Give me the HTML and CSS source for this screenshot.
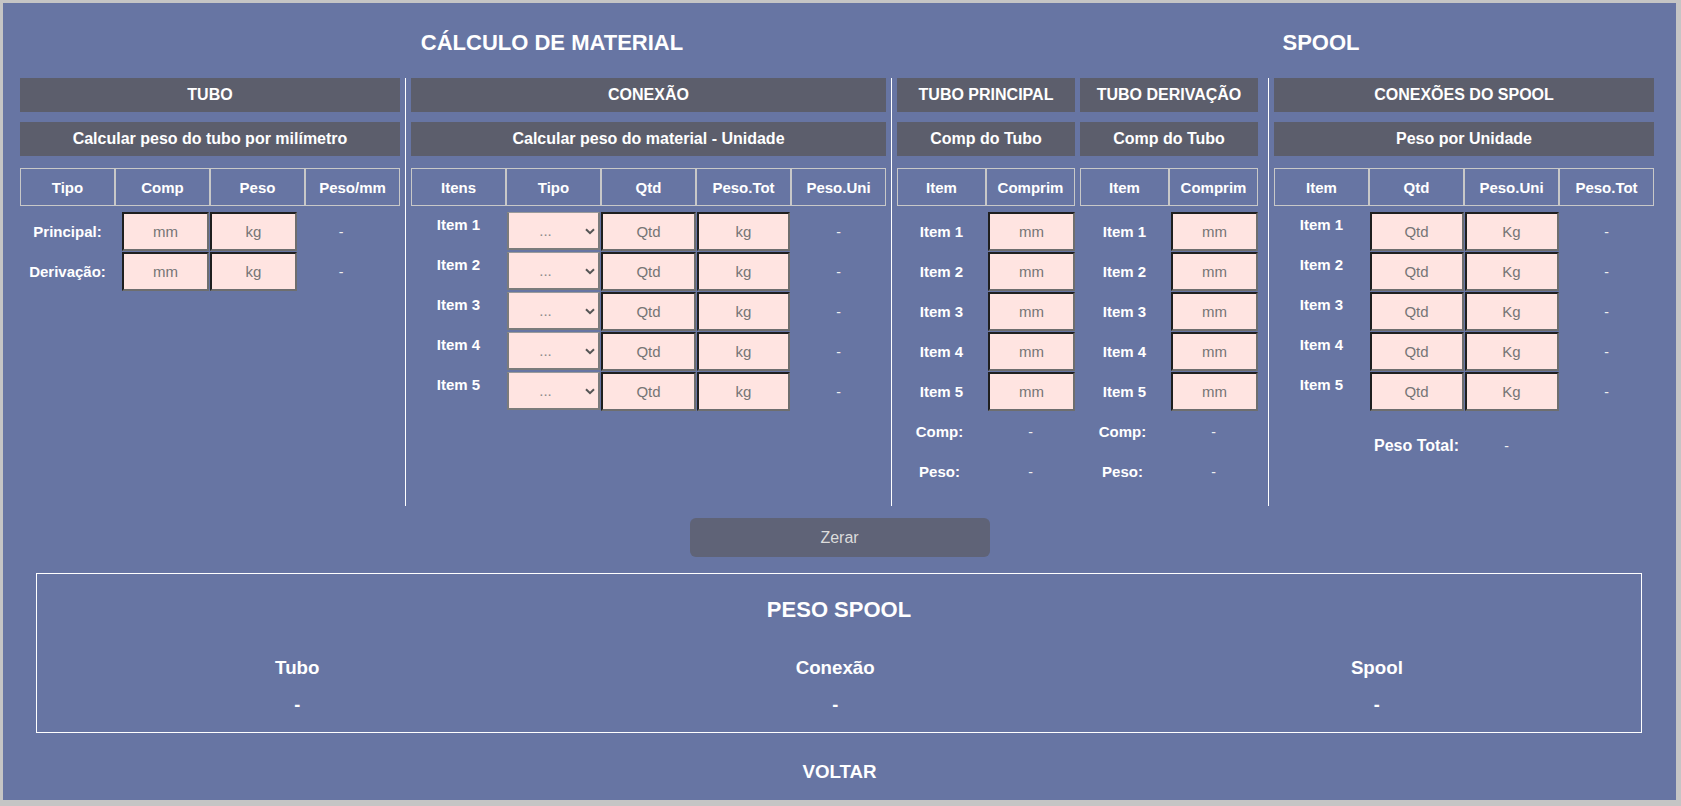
FILE: index.html
```
<!DOCTYPE html>
<html lang="pt-BR">
<head>
<meta charset="utf-8">
<title>Cálculo de Material - Spool</title>
<link rel="stylesheet" href="styles.css">
</head>
<body>
<div class="page">
  <div class="titles">
    <h1 class="t-left">CÁLCULO DE MATERIAL</h1>
    <h1 class="t-right">SPOOL</h1>
  </div>

  <div class="cols">
    <section class="col c-tubo">
      <div class="bar">TUBO</div>
      <div class="bar sub">Calcular peso do tubo por milímetro</div>
      <div class="thead g4"><div>Tipo</div><div>Comp</div><div>Peso</div><div>Peso/mm</div></div>
      <div class="trow">
        <span class="tlbl">Principal:</span>
        <input class="inp w87" placeholder="mm">
        <input class="inp w87 ml1" placeholder="kg">
        <span class="val tval">-</span>
      </div>
      <div class="trow">
        <span class="tlbl">Derivação:</span>
        <input class="inp w87" placeholder="mm">
        <input class="inp w87 ml1" placeholder="kg">
        <span class="val tval">-</span>
      </div>
    </section>

    <div class="divider"></div>

    <section class="col c-con">
      <div class="bar">CONEXÃO</div>
      <div class="bar sub">Calcular peso do material - Unidade</div>
      <div class="thead g5"><div>Itens</div><div>Tipo</div><div>Qtd</div><div>Peso.Tot</div><div>Peso.Uni</div></div>
      <div class="row g5">
        <span class="lbl top">Item 1</span>
        <div class="sel"><select><option>...</option></select><svg class="chev" width="10" height="7" viewBox="0 0 10 7"><path d="M1 1.2 L5 5.2 L9 1.2" fill="none" stroke="#555" stroke-width="2"/></svg></div>
        <input class="inp w95" placeholder="Qtd">
        <input class="inp w93" placeholder="kg">
        <span class="val">-</span>
      </div>
      <div class="row g5">
        <span class="lbl top">Item 2</span>
        <div class="sel"><select><option>...</option></select><svg class="chev" width="10" height="7" viewBox="0 0 10 7"><path d="M1 1.2 L5 5.2 L9 1.2" fill="none" stroke="#555" stroke-width="2"/></svg></div>
        <input class="inp w95" placeholder="Qtd">
        <input class="inp w93" placeholder="kg">
        <span class="val">-</span>
      </div>
      <div class="row g5">
        <span class="lbl top">Item 3</span>
        <div class="sel"><select><option>...</option></select><svg class="chev" width="10" height="7" viewBox="0 0 10 7"><path d="M1 1.2 L5 5.2 L9 1.2" fill="none" stroke="#555" stroke-width="2"/></svg></div>
        <input class="inp w95" placeholder="Qtd">
        <input class="inp w93" placeholder="kg">
        <span class="val">-</span>
      </div>
      <div class="row g5">
        <span class="lbl top">Item 4</span>
        <div class="sel"><select><option>...</option></select><svg class="chev" width="10" height="7" viewBox="0 0 10 7"><path d="M1 1.2 L5 5.2 L9 1.2" fill="none" stroke="#555" stroke-width="2"/></svg></div>
        <input class="inp w95" placeholder="Qtd">
        <input class="inp w93" placeholder="kg">
        <span class="val">-</span>
      </div>
      <div class="row g5">
        <span class="lbl top">Item 5</span>
        <div class="sel"><select><option>...</option></select><svg class="chev" width="10" height="7" viewBox="0 0 10 7"><path d="M1 1.2 L5 5.2 L9 1.2" fill="none" stroke="#555" stroke-width="2"/></svg></div>
        <input class="inp w95" placeholder="Qtd">
        <input class="inp w93" placeholder="kg">
        <span class="val">-</span>
      </div>
    </section>

    <div class="divider"></div>

    <section class="col c-tp">
      <div class="bar">TUBO PRINCIPAL</div>
      <div class="bar sub">Comp do Tubo</div>
      <div class="thead g2"><div>Item</div><div>Comprim</div></div>
      <div class="row g2"><span class="lbl mid">Item 1</span><input class="inp w87 end" placeholder="mm"></div>
      <div class="row g2"><span class="lbl mid">Item 2</span><input class="inp w87 end" placeholder="mm"></div>
      <div class="row g2"><span class="lbl mid">Item 3</span><input class="inp w87 end" placeholder="mm"></div>
      <div class="row g2"><span class="lbl mid">Item 4</span><input class="inp w87 end" placeholder="mm"></div>
      <div class="row g2"><span class="lbl mid">Item 5</span><input class="inp w87 end" placeholder="mm"></div>
      <div class="row g2"><span class="lbl mid sm">Comp:</span><span class="val">-</span></div>
      <div class="row g2"><span class="lbl mid sm">Peso:</span><span class="val">-</span></div>
    </section>

    <section class="col c-td">
      <div class="bar">TUBO DERIVAÇÃO</div>
      <div class="bar sub">Comp do Tubo</div>
      <div class="thead g2"><div>Item</div><div>Comprim</div></div>
      <div class="row g2"><span class="lbl mid">Item 1</span><input class="inp w87 end" placeholder="mm"></div>
      <div class="row g2"><span class="lbl mid">Item 2</span><input class="inp w87 end" placeholder="mm"></div>
      <div class="row g2"><span class="lbl mid">Item 3</span><input class="inp w87 end" placeholder="mm"></div>
      <div class="row g2"><span class="lbl mid">Item 4</span><input class="inp w87 end" placeholder="mm"></div>
      <div class="row g2"><span class="lbl mid">Item 5</span><input class="inp w87 end" placeholder="mm"></div>
      <div class="row g2"><span class="lbl mid sm">Comp:</span><span class="val">-</span></div>
      <div class="row g2"><span class="lbl mid sm">Peso:</span><span class="val">-</span></div>
    </section>

    <div class="divider d-wide"></div>

    <section class="col c-spool">
      <div class="bar">CONEXÕES DO SPOOL</div>
      <div class="bar sub">Peso por Unidade</div>
      <div class="thead g4"><div>Item</div><div>Qtd</div><div>Peso.Uni</div><div>Peso.Tot</div></div>
      <div class="row g4"><span class="lbl top">Item 1</span><input class="inp w94" placeholder="Qtd"><input class="inp w94" placeholder="Kg"><span class="val">-</span></div>
      <div class="row g4"><span class="lbl top">Item 2</span><input class="inp w94" placeholder="Qtd"><input class="inp w94" placeholder="Kg"><span class="val">-</span></div>
      <div class="row g4"><span class="lbl top">Item 3</span><input class="inp w94" placeholder="Qtd"><input class="inp w94" placeholder="Kg"><span class="val">-</span></div>
      <div class="row g4"><span class="lbl top">Item 4</span><input class="inp w94" placeholder="Qtd"><input class="inp w94" placeholder="Kg"><span class="val">-</span></div>
      <div class="row g4"><span class="lbl top">Item 5</span><input class="inp w94" placeholder="Qtd"><input class="inp w94" placeholder="Kg"><span class="val">-</span></div>
      <div class="row g4 total"><span></span><span class="lbl mid big">Peso Total:</span><span class="val shift">-</span></div>
    </section>
  </div>

  <div class="btn-row"><button class="btn">Zerar</button></div>

  <div class="box">
    <h2 class="box-title">PESO SPOOL</h2>
    <div class="sums">
      <div class="sum"><h3>Tubo</h3><div class="sdash">-</div></div>
      <div class="sum"><h3>Conexão</h3><div class="sdash">-</div></div>
      <div class="sum"><h3>Spool</h3><div class="sdash">-</div></div>
    </div>
  </div>

  <div class="back">VOLTAR</div>
</div>
</body>
</html>
```

FILE: styles.css
```
html, body {
  margin: 0;
  padding: 0;
}
body {
  background: #c5c5c5;
  font-family: "Liberation Sans", Arial, sans-serif;
}
.page {
  margin: 3px 5px 0 3px;
  height: 797px;
  box-sizing: border-box;
  background: #6775a3;
  padding-top: 27px;
  color: #fff;
}

/* titles */
.titles {
  display: flex;
  height: 26px;
}
.titles h1 {
  margin: 0;
  font-size: 22px;
  line-height: 26px;
  font-weight: bold;
  text-align: center;
}
.t-left { width: 1098px; }
.t-right { width: 440px; }

/* columns */
.cols {
  display: flex;
  margin-top: 22px;
  height: 428px;
  padding-left: 17px;
}
.divider {
  width: 1px;
  background: #fff;
  margin: 0 5px;
}
.divider.d-wide {
  margin: 0 5px 0 10px;
}
.col {
  display: flex;
  flex-direction: column;
}
.c-tubo { width: 380px; }
.c-con { width: 475px; }
.c-tp { width: 178px; margin-right: 5px; }
.c-td { width: 178px; }
.c-spool { width: 380px; }

.bar {
  height: 34px;
  line-height: 34px;
  background: #5c5e6c;
  text-align: center;
  font-size: 16px;
  font-weight: bold;
  margin-bottom: 10px;
  white-space: nowrap;
}
.bar.sub {
  margin-bottom: 12px;
}

.thead {
  display: grid;
  height: 38px;
  margin-bottom: 6px;
}
.thead div {
  border: 1px solid #c8c8c8;
  display: flex;
  align-items: center;
  justify-content: center;
  font-size: 15px;
  font-weight: bold;
}
.g2 { grid-template-columns: 89px 89px; }
.g4 { grid-template-columns: repeat(4, 95px); }
.g5 { grid-template-columns: repeat(5, 95px); }

/* rows */
.row {
  display: grid;
  height: 40px;
  align-items: start;
}
.lbl {
  font-size: 15px;
  font-weight: bold;
  text-align: center;
  white-space: nowrap;
}
.lbl.top {
  padding-top: 4px;
  line-height: 17px;
}
.lbl.mid {
  line-height: 39px;
}
.lbl.sm {
  padding-right: 4px;
}
.lbl.big {
  font-size: 16px;
}
.val {
  font-size: 14px;
  line-height: 40px;
  text-align: center;
  color: #eeeeee;
}
.val.shift {
  padding-right: 10px;
}
.row.total {
  margin-top: 14px;
}

/* Tubo rows */
.trow {
  display: flex;
  height: 40px;
  align-items: flex-start;
}
.tlbl {
  width: 95px;
  margin-right: 7px;
  font-size: 15px;
  font-weight: bold;
  text-align: center;
  line-height: 39px;
  white-space: nowrap;
}
.tval {
  width: 88px;
}

/* inputs */
.inp {
  box-sizing: border-box;
  height: 39px;
  margin: 0;
  padding: 0;
  background: #ffe4e1;
  border: 2px solid;
  border-color: #1f1f1f #6e6e6e #6e6e6e #1f1f1f;
  font-family: "Liberation Sans", Arial, sans-serif;
  font-size: 15px;
  color: #333;
  text-align: center;
  outline: none;
  justify-self: center;
}
.inp::placeholder {
  color: #757575;
}
.w87 { width: 87px; }
.w93 { width: 93px; }
.w94 { width: 94px; }
.w95 { width: 95px; }
.ml1 { margin-left: 1px; }
.inp.end { justify-self: end; }

.sel {
  position: relative;
  width: 93px;
  height: 38px;
  justify-self: center;
}
.sel select {
  appearance: none;
  -webkit-appearance: none;
  box-sizing: border-box;
  width: 100%;
  height: 100%;
  margin: 0;
  padding: 0 16px 0 0;
  background: #ffe4e1;
  border: 2px solid #7b7b7b;
  border-top: 1px solid #9a9a9a;
  border-radius: 0;
  font-family: "Liberation Sans", Arial, sans-serif;
  font-size: 15px;
  color: #8a8a8a;
  text-align: center;
  text-align-last: center;
  outline: none;
}
.chev {
  position: absolute;
  right: 5px;
  top: 16px;
  pointer-events: none;
}

/* button */
.btn-row {
  display: flex;
  justify-content: center;
  margin-top: 12px;
}
.btn {
  width: 300px;
  height: 39px;
  border: none;
  border-radius: 6px;
  background: #5f6377;
  color: #dcdcdc;
  font-family: "Liberation Sans", Arial, sans-serif;
  font-size: 16px;
  padding: 0;
}

/* summary box */
.box {
  margin: 16px 34px 0 33px;
  height: 160px;
  box-sizing: border-box;
  border: 1px solid #fff;
  padding-top: 23px;
}
.box-title {
  margin: 0;
  font-size: 22px;
  line-height: 26px;
  font-weight: bold;
  text-align: center;
}
.sums {
  display: flex;
  justify-content: space-around;
  margin-top: 34px;
}
.sum {
  text-align: center;
}
.sum h3 {
  margin: 0;
  font-size: 18.72px;
  line-height: 22px;
  font-weight: bold;
}
.sdash {
  margin-top: 15px;
  font-size: 18px;
  font-weight: bold;
  line-height: 22px;
}

.back {
  margin-top: 28px;
  text-align: center;
  font-size: 18.72px;
  line-height: 22px;
  font-weight: bold;
}
```
